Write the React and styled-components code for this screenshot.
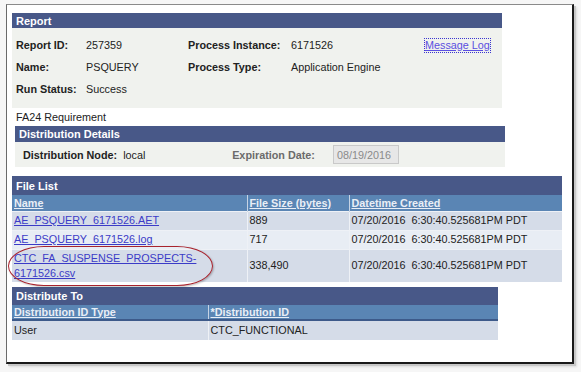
import React from "react";
import styled, { createGlobalStyle } from "styled-components";

const Global = createGlobalStyle`
  html, body { margin: 0; padding: 0; background: #f6f6f6; }
  body { font-family: "Liberation Sans", Arial, sans-serif; font-size: 10.8px; color: #222; }
`;

const Page = styled.div`
  width: 581px;
  height: 372px;
  padding: 4px 0 0 6px;
  box-sizing: border-box;
`;

const Frame = styled.div`
  position: relative;
  width: 568px;
  height: 360px;
  box-sizing: border-box;
  background: #fff;
  border-top: 1px solid #8a8a8a;
  border-left: 1px solid #6a6a6a;
  border-right: 2px solid #1a1a1a;
  border-bottom: 2px solid #1a1a1a;
  box-shadow: 2px 2px 0 #c8c8c8, 3px 3px 2px #dcdcdc;
  padding: 8px 0 0 5px;
  display: flex;
  flex-direction: column;
`;

const Panel = styled.div`
  width: ${(p) => p.$w}px;
  margin-left: ${(p) => p.$ml || 0}px;
  margin-top: ${(p) => p.$mt || 0}px;
`;

const Header = styled.div`
  height: ${(p) => p.$h}px;
  background: #485888;
  color: #fff;
  font-weight: bold;
  font-size: 11px;
  display: flex;
  align-items: center;
  padding-left: 4px;
  box-sizing: border-box;
`;

const PanelBody = styled.div`
  background: #f0f2ee;
  padding: ${(p) => p.$pad};
`;

const InfoGrid = styled.div`
  display: grid;
  grid-template-columns: 70px 102px 103px 134px auto;
  grid-auto-rows: 22px;
  align-items: center;
  padding-left: 4px;
`;

const Label = styled.span`
  font-weight: bold;
  color: ${(p) => (p.$muted ? "#6b6b6b" : "#222")};
`;

const Value = styled.span`
  color: #222;
`;

const LogLink = styled.a`
  color: #5a4fe0;
  text-decoration: underline;
  outline: 1px dotted #3b36d0;
  outline-offset: 0px;
  justify-self: start;
  line-height: 13px;
`;

const Note = styled.div`
  height: 17px;
  display: flex;
  align-items: center;
  padding-left: 4px;
`;

const DistRow = styled.div`
  display: flex;
  align-items: center;
  height: 25px;
  padding-left: 8px;
`;

const NodeValue = styled.span`
  margin-left: 6px;
  width: 109px;
`;

const DateBox = styled.div`
  margin-left: 18px;
  width: 66px;
  height: 19px;
  box-sizing: border-box;
  border: 1px solid #c9c9c9;
  background: #e7e7e7;
  color: #8a8a8a;
  display: flex;
  align-items: center;
  padding-left: 3px;
`;

const Table = styled.table`
  width: 100%;
  border-collapse: collapse;
  table-layout: fixed;
  font-size: 10.8px;
`;

const Th = styled.th`
  height: ${(p) => p.$h}px;
  box-sizing: border-box;
  background: #5a85b4;
  text-align: left;
  font-weight: bold;
  color: #e9eef6;
  text-decoration: underline;
  padding: 0 0 0 2px;
  border-left: 1px solid #c6d3e4;
  border-bottom: ${(p) => (p.$line ? "2px solid #3d5a8a" : "none")};
  width: ${(p) => (p.$w ? p.$w + "px" : "auto")};
  &:first-child { border-left: none; }
`;

const Tr = styled.tr`
  background: ${(p) => (p.$alt ? "#e8edf4" : "#d5dce8")};
`;

const Td = styled.td`
  height: ${(p) => p.$h}px;
  padding: 0 0 0 2px;
  color: #222;
  border-left: 1px solid #eef1f6;
  border-top: 1px solid #eef1f6;
  vertical-align: middle;
  line-height: 15px;
  &:first-child { border-left: none; }
`;

const FileLink = styled.a`
  color: #3b3bc7;
  text-decoration: underline;
`;

const Ring = styled.div`
  position: absolute;
  left: 1px;
  top: 241px;
  width: 205px;
  height: 40px;
  box-sizing: border-box;
  border: 1.5px solid #a8232d;
  border-radius: 36px / 20px;
  box-shadow: 1px 1px 2px rgba(0, 0, 0, 0.25);
  pointer-events: none;
`;

export default function App() {
  return (
    <>
      <Global />
      <Page>
        <Frame>
          <Panel $w={490}>
            <Header $h={15}>Report</Header>
            <PanelBody $pad="6px 0 8px 0">
              <InfoGrid>
                <Label>Report ID:</Label>
                <Value>257359</Value>
                <Label>Process Instance:</Label>
                <Value>6171526</Value>
                <LogLink>Message Log</LogLink>
                <Label>Name:</Label>
                <Value>PSQUERY</Value>
                <Label>Process Type:</Label>
                <Value>Application Engine</Value>
                <span />
                <Label>Run Status:</Label>
                <Value>Success</Value>
                <span />
                <span />
                <span />
              </InfoGrid>
            </PanelBody>
          </Panel>
          <Note>FA24 Requirement</Note>
          <Panel $w={490} $ml={3} $mt={1}>
            <Header $h={16}>Distribution Details</Header>
            <PanelBody $pad="0">
              <DistRow>
                <Label>Distribution Node:</Label>
                <NodeValue>local</NodeValue>
                <Label $muted>Expiration Date:</Label>
                <DateBox>08/19/2016</DateBox>
              </DistRow>
            </PanelBody>
          </Panel>
          <Panel $w={550} $mt={9}>
            <Header $h={19}>File List</Header>
            <Table>
              <thead>
                <tr>
                  <Th $h={16} $w={235}>Name</Th>
                  <Th $h={16} $w={102}>File Size (bytes)</Th>
                  <Th $h={16}>Datetime Created</Th>
                </tr>
              </thead>
              <tbody>
                <Tr>
                  <Td $h={18}><FileLink>AE_PSQUERY_6171526.AET</FileLink></Td>
                  <Td $h={18}>889</Td>
                  <Td $h={18}>07/20/2016&nbsp; 6:30:40.525681PM PDT</Td>
                </Tr>
                <Tr $alt>
                  <Td $h={18}><FileLink>AE_PSQUERY_6171526.log</FileLink></Td>
                  <Td $h={18}>717</Td>
                  <Td $h={18}>07/20/2016&nbsp; 6:30:40.525681PM PDT</Td>
                </Tr>
                <Tr>
                  <Td $h={32}>
                    <FileLink>
                      CTC_FA_SUSPENSE_PROSPECTS-
                      <br />
                      6171526.csv
                    </FileLink>
                  </Td>
                  <Td $h={32}>338,490</Td>
                  <Td $h={32}>07/20/2016&nbsp; 6:30:40.525681PM PDT</Td>
                </Tr>
              </tbody>
            </Table>
          </Panel>
          <Panel $w={486} $mt={5}>
            <Header $h={18}>Distribute To</Header>
            <Table>
              <thead>
                <tr>
                  <Th $h={15} $w={196} $line>Distribution ID Type</Th>
                  <Th $h={15} $line>*Distribution ID</Th>
                </tr>
              </thead>
              <tbody>
                <Tr>
                  <Td $h={19}>User</Td>
                  <Td $h={19}>CTC_FUNCTIONAL</Td>
                </Tr>
              </tbody>
            </Table>
          </Panel>
          <Ring />
        </Frame>
      </Page>
    </>
  );
}
